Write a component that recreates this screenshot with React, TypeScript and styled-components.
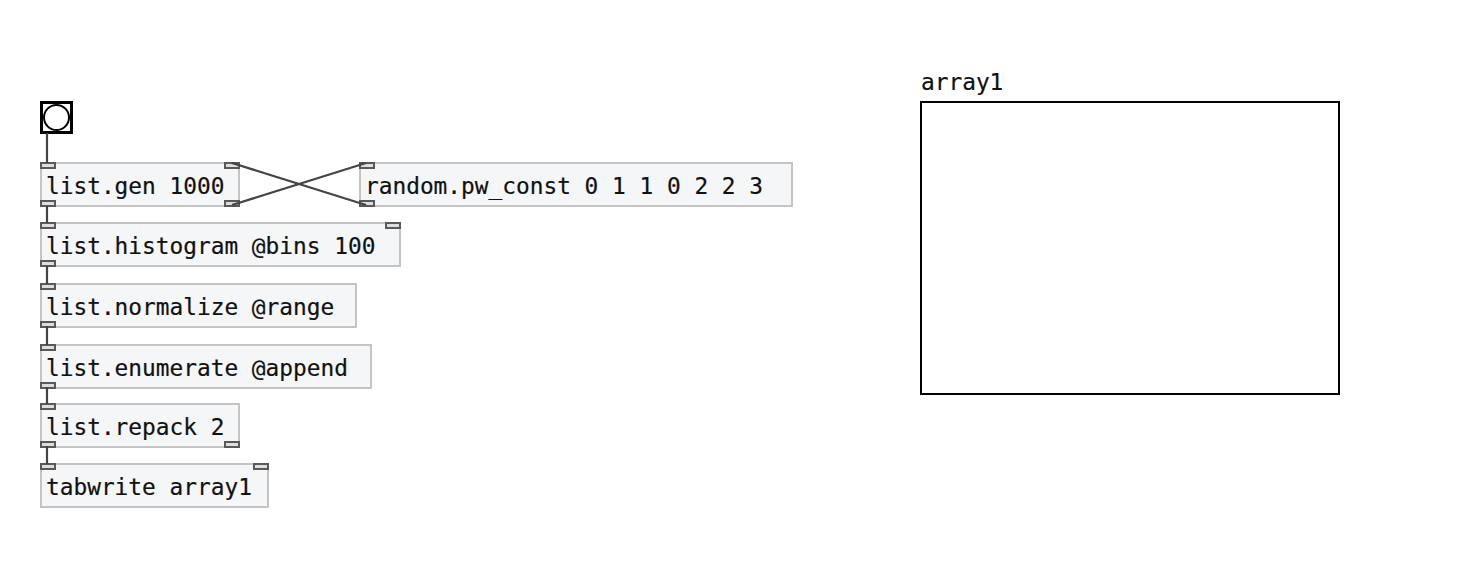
import * as React from "react";
import styled, { createGlobalStyle } from "styled-components";

const GlobalStyle = createGlobalStyle`
  html, body {
    margin: 0;
    padding: 0;
    background: #ffffff;
  }
  body {
    font-family: "DejaVu Sans Mono", "Liberation Mono", monospace;
  }
`;

// the patch is a free canvas: every object sits at its own place on it
const Canvas = styled.div`
  position: relative;
  width: 1465px;
  height: 567px;
  background: #ffffff;
  overflow: hidden;
`;

const Wires = styled.svg`
  position: absolute;
  left: 0;
  top: 0;
  width: 1465px;
  height: 567px;
  pointer-events: none;
  z-index: 2;
`;

const ObjectBox = styled.div<{ $x: number; $y: number; $w: number }>`
  position: absolute;
  left: ${(p) => p.$x}px;
  top: ${(p) => p.$y}px;
  width: ${(p) => p.$w}px;
  height: 45px;
  box-sizing: border-box;
  border: 2px solid #c4c4c4;
  background: #f5f6f8;
  display: flex;
  align-items: center;
  padding: 3px 0 0 4px;
  font-family: "DejaVu Sans Mono", "Liberation Mono", monospace;
  font-size: 22.8px;
  color: #111;
  white-space: pre;
  -webkit-text-stroke: 0.2px #111;
  z-index: 1;
`;

const Iolet = styled.span<{ $side: "left" | "right"; $edge: "top" | "bottom" }>`
  position: absolute;
  ${(p) => (p.$side === "left" ? "left: -2px;" : "right: -2px;")}
  ${(p) => (p.$edge === "top" ? "top: -2px;" : "bottom: -2px;")}
  width: 16px;
  height: 7px;
  box-sizing: border-box;
  border: 2px solid #595959;
  background: #dedede;
  z-index: 3;
`;

const Bang = styled.div`
  position: absolute;
  left: 40px;
  top: 101px;
  width: 33px;
  height: 33px;
  box-sizing: border-box;
  border: 3px solid #000;
  background: #fff;
  display: flex;
  align-items: center;
  justify-content: center;
  z-index: 1;
`;

const BangCircle = styled.div`
  width: 27px;
  height: 27px;
  box-sizing: border-box;
  border: 2.5px solid #000;
  border-radius: 50%;
`;

const ArrayLabel = styled.div`
  position: absolute;
  left: 921px;
  top: 69px;
  font-family: "DejaVu Sans Mono", "Liberation Mono", monospace;
  font-size: 22.8px;
  color: #111;
  -webkit-text-stroke: 0.2px #111;
`;

const ArrayFrame = styled.div`
  position: absolute;
  left: 920px;
  top: 101px;
  width: 420px;
  height: 294px;
  box-sizing: border-box;
  border: 2px solid #000;
  background: #fff;
`;

interface Node {
  x: number;
  y: number;
  w: number;
  text: string;
  iolets: Array<["left" | "right", "top" | "bottom"]>;
}

const nodes: Node[] = [
  {
    x: 40,
    y: 162,
    w: 200,
    text: "list.gen 1000",
    iolets: [
      ["left", "top"],
      ["right", "top"],
      ["left", "bottom"],
      ["right", "bottom"],
    ],
  },
  {
    x: 359,
    y: 162,
    w: 434,
    text: "random.pw_const 0 1 1 0 2 2 3",
    iolets: [
      ["left", "top"],
      ["left", "bottom"],
    ],
  },
  {
    x: 40,
    y: 222,
    w: 361,
    text: "list.histogram @bins 100",
    iolets: [
      ["left", "top"],
      ["right", "top"],
      ["left", "bottom"],
    ],
  },
  {
    x: 40,
    y: 283,
    w: 317,
    text: "list.normalize @range",
    iolets: [
      ["left", "top"],
      ["left", "bottom"],
    ],
  },
  {
    x: 40,
    y: 344,
    w: 332,
    text: "list.enumerate @append",
    iolets: [
      ["left", "top"],
      ["left", "bottom"],
    ],
  },
  {
    x: 40,
    y: 403,
    w: 200,
    text: "list.repack 2",
    iolets: [
      ["left", "top"],
      ["left", "bottom"],
      ["right", "bottom"],
    ],
  },
  {
    x: 40,
    y: 463,
    w: 229,
    text: "tabwrite array1",
    iolets: [
      ["left", "top"],
      ["right", "top"],
    ],
  },
];

const wires: Array<[number, number, number, number]> = [
  [47, 133, 47, 163],
  [47, 206, 47, 223],
  [47, 266, 47, 284],
  [47, 326, 47, 345],
  [47, 387, 47, 404],
  [47, 446, 47, 464],
  [232, 163, 366, 205],
  [232, 205, 366, 163],
];

const App = () => {
  return (
    <>
      <GlobalStyle />
      <Canvas>
        <Wires viewBox="0 0 1465 567">
          {wires.map(([x1, y1, x2, y2], i) => (
            <line
              key={i}
              x1={x1}
              y1={y1}
              x2={x2}
              y2={y2}
              stroke="#444"
              strokeWidth={2.2}
            />
          ))}
        </Wires>
        <Bang>
          <BangCircle />
        </Bang>
        {nodes.map((n) => (
          <ObjectBox key={n.text} $x={n.x} $y={n.y} $w={n.w}>
            {n.text}
            {n.iolets.map(([side, edge]) => (
              <Iolet key={side + edge} $side={side} $edge={edge} />
            ))}
          </ObjectBox>
        ))}
        <ArrayLabel>array1</ArrayLabel>
        <ArrayFrame />
      </Canvas>
    </>
  );
};

export default App;
